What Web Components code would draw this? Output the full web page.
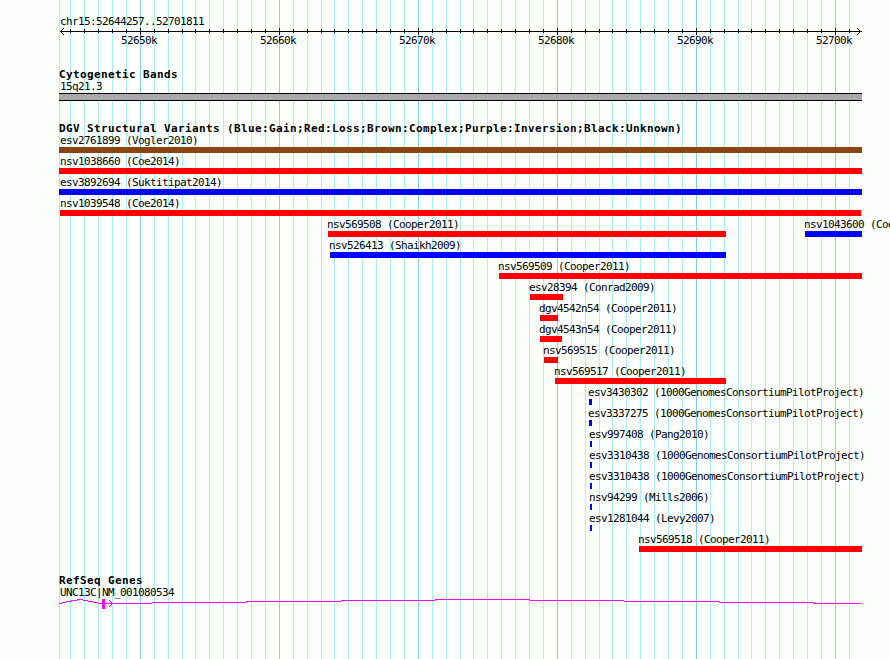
<!DOCTYPE html>
<html lang="en">
<head>
<meta charset="utf-8">
<title>chr15:52644257..52701811</title>
<style>
html,body{margin:0;padding:0;background:#fdfffc}
body{width:890px;height:659px;overflow:hidden;font:11px/14px "DejaVu Sans Mono","Liberation Mono",monospace;letter-spacing:-.622px;color:#000}
</style>
</head>
<body>
<genome-browser></genome-browser>
<script>
const LEFT = 59;
const STEPS = [0,14,28,42,55,69,83,97,111,125];
const ticks = [];
for (let m = -1; m < 6; m++) STEPS.forEach((s, i) => {
  const x = 140 + 139 * m + s;
  if (x > LEFT && x < 860) ticks.push({x, major: i === 0});
});

class GridLines extends HTMLElement {
  connectedCallback() {
    const r = this.attachShadow({mode:'open'});
    const line = (x, c) => `<rect x="${x}" width="1" height="659" fill="${c}"/>`;
    r.innerHTML = `<style>:host{display:block}svg{display:block}</style>
      <svg width="890" height="659" shape-rendering="crispEdges">${line(LEFT,'#afeeee')}${ticks.map(t => line(t.x, t.major ? '#87ceeb' : '#afeeee')).join('')}</svg>`;
  }
}
class ScaleRuler extends HTMLElement {
  connectedCallback() {
    const r = this.attachShadow({mode:'open'});
    const majors = ticks.filter(t => t.major);
    r.innerHTML = `<style>
      :host{display:block;height:52px}
      .region{height:13px;padding-left:60px;white-space:pre}
      svg{display:block}
      .nums{display:grid;grid-template-columns:repeat(6,139px);padding-left:121px}
      </style>
      <div class="region">${this.getAttribute('region')}</div>
      <svg width="890" height="6" overflow="visible" viewBox="0 28 890 6" shape-rendering="crispEdges">
        <rect x="60" y="31" width="802" height="1"/>
        ${ticks.map(t => t.major ? `<rect x="${t.x}" y="28" width="1" height="7"/>` : `<rect x="${t.x}" y="29" width="1" height="4"/>`).join('')}
        <path d="M61 30h1v-1h1v-1h1v1h-1v1h-1v1h-1zM61 32h1v1h1v1h1v1h-1v-1h-1v-1h-1zM860 30h-1v-1h-1v-1h-1v1h1v1h1v1h1zM860 32h-1v1h-1v1h-1v1h1v-1h1v-1h1z"/>
      </svg>
      <div class="nums">${majors.map((t, i) => `<span>${52650 + i * 10}k</span>`).join('')}</div>`;
  }
}
class TrackSection extends HTMLElement {
  connectedCallback() {
    const r = this.attachShadow({mode:'open'});
    r.innerHTML = `<style>
      :host{display:block}
      h2{margin:0;padding-left:59px;height:12px;font-size:11px;line-height:14px;font-weight:bold;letter-spacing:.378px;white-space:pre}
      </style><h2>${this.getAttribute('heading')}</h2><slot></slot>`;
  }
}
class CytoBand extends HTMLElement {
  connectedCallback() {
    const r = this.attachShadow({mode:'open'});
    r.innerHTML = `<style>
      :host{display:block;padding-left:59px}
      .name{height:13px;padding-left:1px}
      .band{box-sizing:border-box;width:803px;height:8px;background:#aaa8aa;border:solid #000;border-width:1px 0}
      </style><div class="name"><slot></slot></div><div class="band"></div>`;
  }
}
class FeatureRow extends HTMLElement {
  connectedCallback() {
    const r = this.attachShadow({mode:'open'});
    r.innerHTML = `<style>:host{display:flex;height:21px}</style><slot></slot>`;
  }
}
class VariantFeature extends HTMLElement {
  connectedCallback() {
    const r = this.attachShadow({mode:'open'});
    const a = n => +this.getAttribute(n);
    r.innerHTML = `<style>
      :host{display:block;flex:none;margin-left:${a('gap')}px;width:${a('size')}px}
      .name{height:13px;white-space:pre;margin-left:${a('shift')}px}
      .bar{height:6px;background:${this.getAttribute('tone')}}
      </style><div class="name"><slot></slot></div><div class="bar"></div>`;
  }
}
class GeneModel extends HTMLElement {
  connectedCallback() {
    const r = this.attachShadow({mode:'open'});
    const runs = [[59,603,3],[62,602,4],[66,601,5],[71,600,6],[77,599,6],[83,600,5],[88,601,5],[93,602,5],[98,603,54],
      [152,602,94],[246,601,95],[341,600,94],[435,599,95],[530,600,94],[624,601,95],[719,602,94],[813,603,48]];
    r.innerHTML = `<style>:host{display:block}.name{height:13px;padding-left:60px;white-space:pre}svg{display:block}</style>
      <div class="name"><slot></slot></div>
      <svg width="890" height="12" viewBox="0 599 890 12" fill="#f0f" shape-rendering="crispEdges">
        ${runs.map(([x,y,w]) => `<rect x="${x}" y="${y}" width="${w}" height="1"/>`).join('')}
        <rect x="102" y="599" width="3" height="10"/>
        ${[[109,600],[110,601],[111,602],[111,604],[110,605],[109,606]].map(([x,y]) => `<rect x="${x}" y="${y}" width="1" height="1"/>`).join('')}
      </svg>`;
  }
}
class GenomeBrowser extends HTMLElement {
  connectedCallback() {
    const r = this.attachShadow({mode:'open'});
    const R = '#f00', B = '#00f', N = '#8b4513', P = '1000GenomesConsortiumPilotProject';
    const rows = [
      [['esv2761899 (Vogler2010)',59,862,N,1]],
      [['nsv1038660 (Coe2014)',59,862,R,1]],
      [['esv3892694 (Suktitipat2014)',59,862,B,1]],
      [['nsv1039548 (Coe2014)',60,861,R,0]],
      [['nsv569508 (Cooper2011)',328,726,R,-1],['nsv1043600 (Coe2014)',805,862,B,-1]],
      [['nsv526413 (Shaikh2009)',330,726,B,-1]],
      [['nsv569509 (Cooper2011)',499,862,R,-1]],
      [['esv28394 (Conrad2009)',530,563,R,-1]],
      [['dgv4542n54 (Cooper2011)',540,558,R,-1]],
      [['dgv4543n54 (Cooper2011)',540,562,R,-1]],
      [['nsv569515 (Cooper2011)',544,558,R,-1]],
      [['nsv569517 (Cooper2011)',555,726,R,-1]],
      [[`esv3430302 (${P})`,589,592,B,-1]],
      [[`esv3337275 (${P})`,589,592,B,-1]],
      [['esv997408 (Pang2010)',590,592,B,-1]],
      [[`esv3310438 (${P})`,590,592,B,-1]],
      [[`esv3310438 (${P})`,590,592,B,-1]],
      [['nsv94299 (Mills2006)',590,592,B,-1]],
      [['esv1281044 (Levy2007)',590,592,B,-1]],
      [['nsv569518 (Cooper2011)',639,862,R,-1]]
    ];
    const html = rows.map(row => {
      let end = 0;
      return '<feature-row>' + row.map(([name,s,e,c,d]) => {
        const gap = s - end; end = e;
        return `<variant-feature gap="${gap}" size="${e - s}" tone="${c}" shift="${d}">${name}</variant-feature>`;
      }).join('') + '</feature-row>';
    }).join('');
    r.innerHTML = `<style>
      :host{display:grid;width:890px;height:659px;overflow:hidden}
      grid-lines,main{grid-area:1/1}
      main{padding-top:15px;z-index:1}
      .cyto{margin-top:1px}
      .dgv{margin-top:21px}
      .genes{margin-top:20px}
      </style>
      <grid-lines></grid-lines>
      <main>
        <scale-ruler region="chr15:52644257..52701811"></scale-ruler>
        <track-section class="cyto" heading="Cytogenetic Bands"><cyto-band>15q21.3</cyto-band></track-section>
        <track-section class="dgv" heading="DGV Structural Variants (Blue:Gain;Red:Loss;Brown:Complex;Purple:Inversion;Black:Unknown)">${html}</track-section>
        <track-section class="genes" heading="RefSeq Genes"><gene-model>UNC13C|NM_001080534</gene-model></track-section>
      </main>`;
  }
}
customElements.define('grid-lines', GridLines);
customElements.define('scale-ruler', ScaleRuler);
customElements.define('track-section', TrackSection);
customElements.define('cyto-band', CytoBand);
customElements.define('feature-row', FeatureRow);
customElements.define('variant-feature', VariantFeature);
customElements.define('gene-model', GeneModel);
customElements.define('genome-browser', GenomeBrowser);
</script>
</body>
</html>
